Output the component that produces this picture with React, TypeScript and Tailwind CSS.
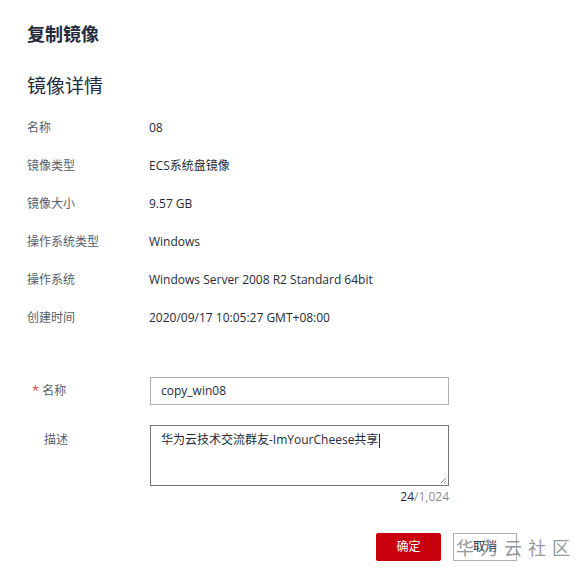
const details = [
  { label: "名称", value: "08" },
  { label: "镜像类型", value: "ECS系统盘镜像" },
  { label: "镜像大小", value: "9.57 GB" },
  { label: "操作系统类型", value: "Windows" },
  { label: "操作系统", value: "Windows Server 2008 R2 Standard 64bit" },
  { label: "创建时间", value: "2020/09/17 10:05:27 GMT+08:00" },
];

const font = { fontFamily: '"Open Sans", "Noto Sans CJK SC", sans-serif' };

export default function App() {
  return (
    <div
      className="relative w-[588px] h-[574px] bg-white text-[#252b3a] overflow-hidden"
      style={font}
    >
      <div className="pl-[27px] pt-[21px]">
        <h1 className="text-[18px] font-bold leading-[26px] text-[#252b3a]">复制镜像</h1>
        <h2 className="mt-[26px] text-[19px] leading-[26px] text-[#252b3a]">镜像详情</h2>

        <div className="mt-[10px] flex flex-col">
          {details.map((d) => (
            <div key={d.label} className="flex items-center h-[38px] text-[12px]">
              <div className="w-[122px] text-[#575d6c]">{d.label}</div>
              <div className="text-[#252b3a]">{d.value}</div>
            </div>
          ))}
        </div>

        <div className="mt-[40px] flex items-center text-[12px]">
          <div className="w-[123px] flex items-center pl-[5px] text-[#575d6c]">
            <span className="text-[#e54545] mr-[3px] text-[13px]">*</span>
            <span>名称</span>
          </div>
          <div className="w-[299px] h-[28px] border border-[#adb0b8] flex items-center px-[10px] text-[#252b3a]">
            copy_win08
          </div>
        </div>

        <div className="mt-[20px] flex text-[12px]">
          <div className="w-[123px] pl-[17px] pt-[6px] text-[#575d6c]">描述</div>
          <div className="relative w-[299px] h-[61px] border border-[#71757f] px-[10px] pt-[5px] text-[#252b3a]">
            <span>华为云技术交流群友-ImYourCheese共享</span>
            <span className="inline-block w-px h-[14px] bg-[#252b3a] align-middle ml-px" />
            <svg
              className="absolute right-[1px] bottom-[1px]"
              width="7"
              height="7"
              viewBox="0 0 7 7"
            >
              <path d="M6 1 L1 6 M6 4 L4 6" stroke="#8a8e99" strokeWidth="1" />
            </svg>
          </div>
        </div>
        <div className="w-[422px] text-right text-[12px] mt-[3px] leading-[16px]">
          <span className="text-[#252b3a]">24</span>
          <span className="text-[#8a8e99]">/1,024</span>
        </div>

        <div className="mt-[28px] w-[490px] flex justify-end gap-[12px] text-[12px]">
          <button className="w-[65px] h-[28px] bg-[#c7000b] text-white rounded-[2px]">确定</button>
          <button className="w-[64px] h-[28px] border border-[#adb0b8] bg-white text-[#252b3a]">取消</button>
        </div>
      </div>

      <div className="absolute left-[456px] top-[535px] whitespace-nowrap text-[18px] tracking-[6px] text-[#7a7d84]/80 pointer-events-none">
        华为云社区
      </div>
    </div>
  );
}
